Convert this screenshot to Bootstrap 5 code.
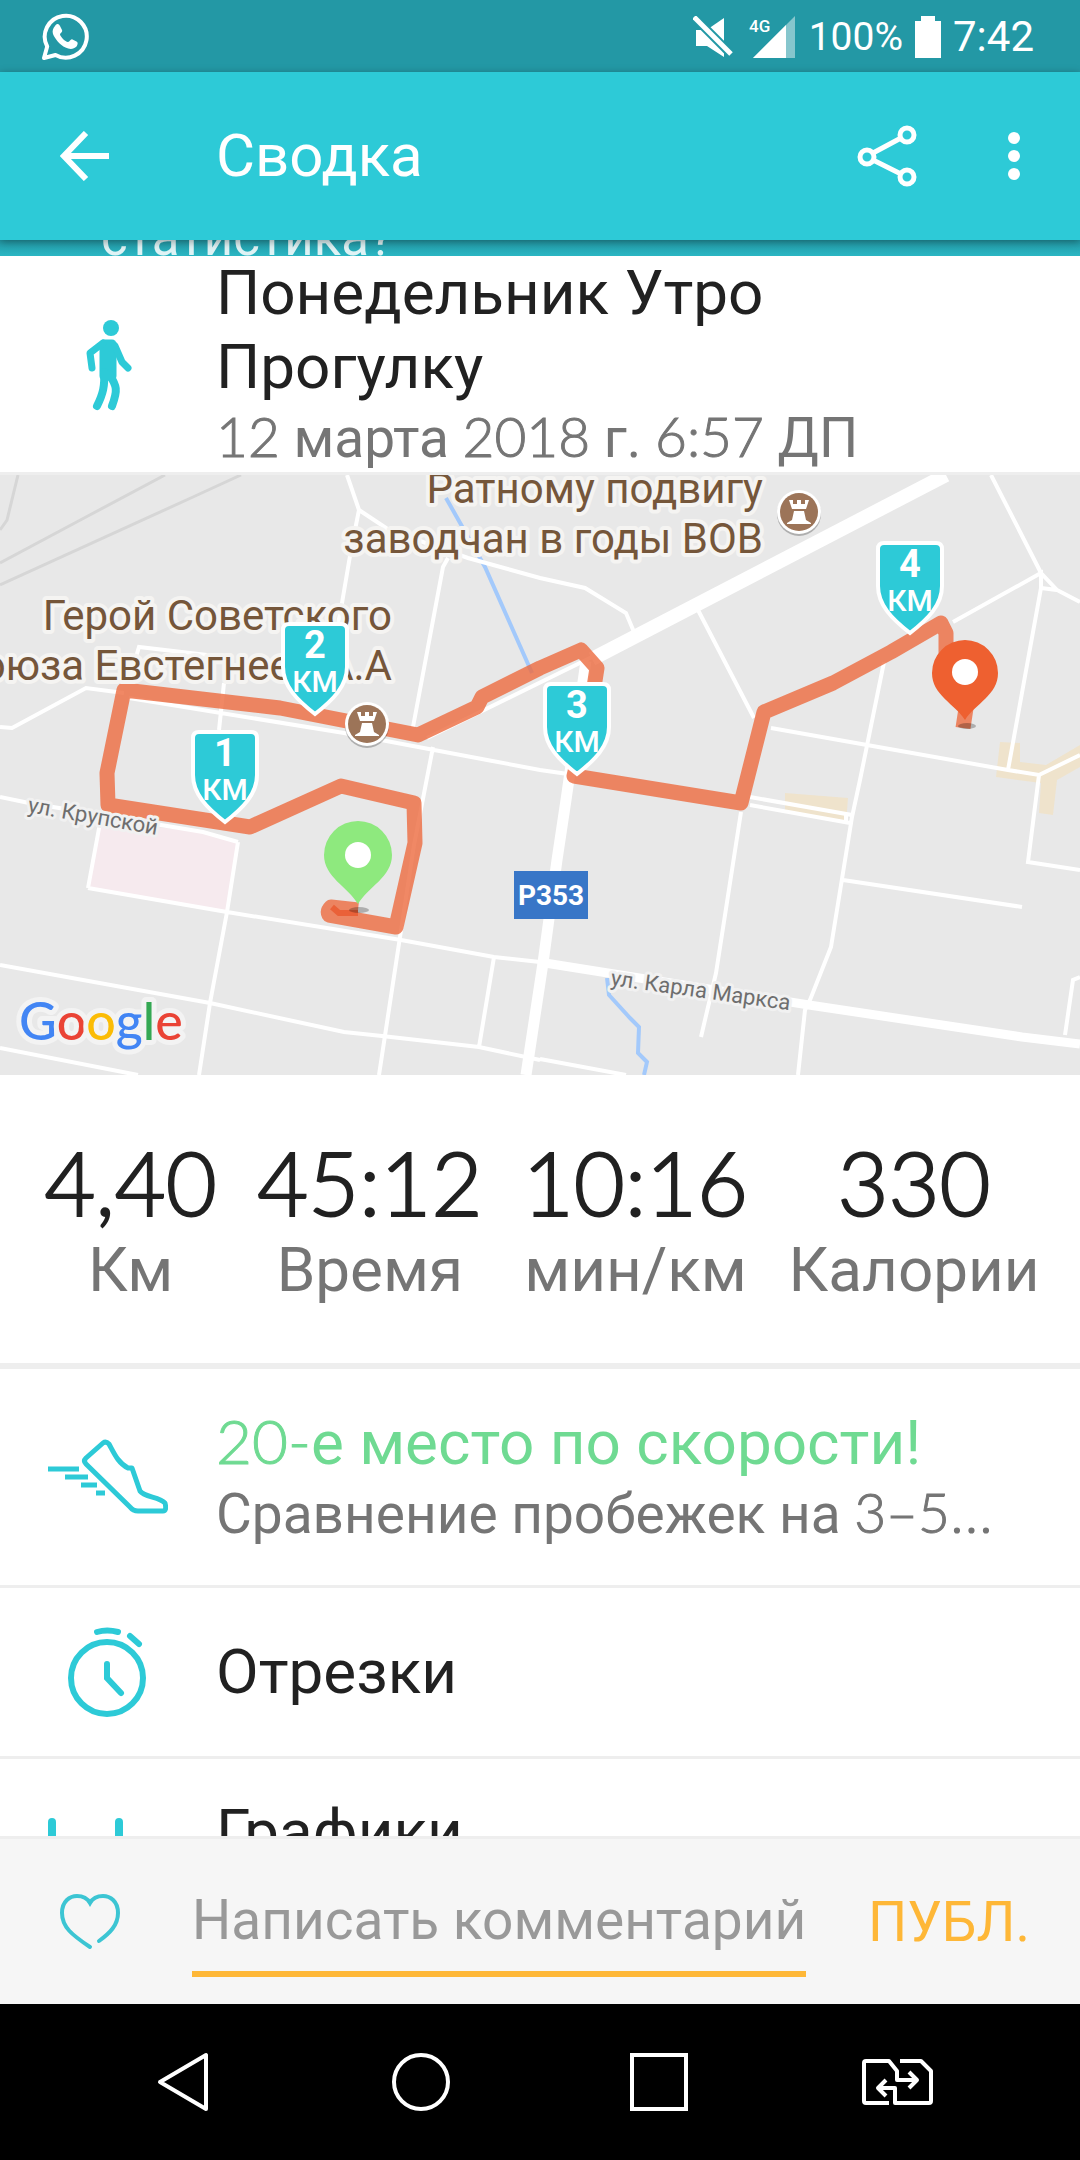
<!DOCTYPE html>
<html lang="ru">
<head>
<meta charset="utf-8">
<meta name="viewport" content="width=device-width, initial-scale=1">
<title>Сводка</title>
<link href="https://cdn.jsdelivr.net/npm/bootstrap@5.3.0/dist/css/bootstrap.min.css" rel="stylesheet">
<style>
  :root { --teal: #2dcad7; --teal-dark: #2398a5; --ink: #212121; --muted: #757575; --amber: #feb737; --rule: #eeeeee; }
  body { font-family: Roboto, "Noto Sans", sans-serif; color: var(--ink); background: #fff; }
  svg { display: block; flex: none; }
  .status-bar { height: 72px; background: var(--teal-dark); color: #fff; padding: 2px 46px 0 40px; }
  .status-pct { font-size: 39px; line-height: 44px; margin: 0 12px; }
  .status-time { font-size: 42px; line-height: 44px; }
  .app-bar { height: 168px; background: var(--teal); color: #fff; box-shadow: 0 2px 8px rgba(0,0,0,.35); z-index: 2; padding: 0 60px; }
  .app-bar h1 { font-size: 60px; line-height: 74px; font-weight: 400; padding-left: 106px; }
  .app-actions { gap: 90px; }
  .icon-btn { border: 0; background: none; padding: 0; color: inherit; }
  .scroll-view { min-height: 0; }
  .promo { height: 16px; background: linear-gradient(#2399a6, #2ab6c3); color: #dff3f5; font-size: 51px; line-height: 36px; padding-left: 101px; }
  .lead-icon { width: 216px; padding-left: 48px; color: var(--teal); flex: none; }
  .line-title { font-size: 62px; line-height: 74px; font-weight: 400; }
  .line-sub { font-size: 55px; line-height: 68px; color: var(--muted); }
  .digits { font-family: Lato, Roboto, sans-serif; font-weight: 300; line-height: 1; -webkit-text-stroke: 1px currentColor; }
  .summary-head { border-bottom: 3px solid var(--rule); }
  .map-view svg { width: 100%; height: auto; }
  .stats { padding: 57px 0 56px 4px; border-bottom: 6px solid var(--rule); }
  .stats dd { font-family: Lato, Roboto, sans-serif; font-weight: 300; -webkit-text-stroke: 2px currentColor; font-size: 88px; line-height: 100px; }
  .stats dt { font-size: 62px; line-height: 75px; font-weight: 400; color: var(--muted); }
  .menu-row { color: var(--ink); border-bottom: 3px solid var(--rule); height: 171px; }
  .menu-row.tall { height: 219px; }
  .menu-row.last { height: 148px; }
  .place { color: #6fda92; }
  .comment-bar { height: 168px; border-top: 3px solid var(--rule); background: #f6f6f6; padding: 0 50px 0 60px; }
  .comment-box { height: 110px; min-width: 0; margin: 0 62px 0 72px; padding: 2px 0 0; border: 0; border-bottom: 6px solid var(--amber); border-radius: 0; background: none; font-size: 55px; }
  .comment-box::placeholder { color: #999; opacity: 1; }
  .publish { font-size: 55px; line-height: 68px; color: var(--amber); }
  .nav-bar { height: 156px; background: #000; color: #fff; padding: 0 146px; }
</style>
</head>
<body>
<div class="d-flex flex-column vh-100 overflow-hidden">
  <div class="status-bar d-flex align-items-center flex-shrink-0">
    <svg width="50" height="50" viewBox="0 0 50 50" fill="none" stroke="#fff" aria-label="WhatsApp"><path d="M4 46l3.200-11.500A21 21 0 1 1 15.500 43z" stroke-width="4" stroke-linejoin="round"/><path d="M15 14c2-3 4-2 5 0l2 4c1 2-2 3-2 4.500 1 3 5 7 8 7.500 2 0 2.500-3.500 4.500-2.500l4 2c2 1 1 3.500 0 5-3 3-7 3-11 1C20 33 15 27 13 22c-1-3 0-6 2-8z" fill="#fff" stroke="none"/></svg>
    <svg class="ms-auto" width="40" height="42" viewBox="0 0 40 42" fill="#fff" aria-label="Без звука"><path d="M31 2v27L15 13z"/><path d="M3 14h6l22 22v5L14 30H3z"/><path d="M1 1l37 37" stroke="#2398a5" stroke-width="9"/><path d="M1 1l37 37" stroke="#fff" stroke-width="5"/></svg>
    <svg class="ms-3" width="48" height="44" viewBox="0 0 48 44" aria-label="4G"><path d="M4 43L46 1v42z" fill="#fff" opacity=".45"/><path d="M4 43L37 10v33z" fill="#fff"/><text x="0" y="17" font-size="17" font-weight="500" fill="#fff">4G</text></svg>
    <span class="status-pct">100%</span>
    <svg width="26" height="44" viewBox="0 0 26 44" fill="#fff" aria-label="Батарея"><path d="M6 1h14v5h6v37H0V6h6z"/></svg>
    <span class="status-time ms-2 ps-1">7:42</span>
  </div>

  <header class="app-bar d-flex align-items-center flex-shrink-0 position-relative">
    <button class="icon-btn" type="button" aria-label="Назад"><svg width="50" height="50" viewBox="0 0 50 50" fill="none" stroke="currentColor" stroke-width="6"><path d="M26 2L4 25l22 23M4 25h45"/></svg></button>
    <h1 class="mb-0">Сводка</h1>
    <div class="app-actions d-flex align-items-center ms-auto">
      <button class="icon-btn" type="button" aria-label="Поделиться"><svg width="62" height="62" viewBox="0 0 62 62" fill="none" stroke="currentColor" stroke-width="5"><circle cx="11" cy="32" r="7"/><circle cx="51" cy="10" r="7"/><circle cx="51" cy="52" r="7"/><path d="M17 28l28-15M17 35l28 14"/></svg></button>
      <button class="icon-btn" type="button" aria-label="Ещё"><svg width="12" height="48" viewBox="0 0 12 48" fill="currentColor"><circle cx="6" cy="6" r="6"/><circle cx="6" cy="24" r="6"/><circle cx="6" cy="42" r="6"/></svg></button>
    </div>
  </header>

  <main class="scroll-view flex-grow-1 overflow-hidden">
    <div class="promo d-flex align-items-end overflow-hidden">статистика?</div>

    <section class="summary-head d-flex align-items-center">
      <div class="lead-icon"><svg width="120" height="96" viewBox="0 0 120 96" fill="none" stroke="currentColor" stroke-linecap="round" stroke-linejoin="round"><circle cx="63" cy="12" r="8" fill="currentColor" stroke="none"/><path d="M56 28h8v32H56z" fill="currentColor" stroke-width="9"/><path d="M55 27L42 37l2 15M67 30l7 16 6 6" stroke-width="7"/><path d="M56 56c1 14-1 22-7 34M61 58c8 12 9 16 3 32" stroke-width="8"/></svg></div>
      <div>
        <h2 class="line-title mb-0">Понедельник Утро<br>Прогулку</h2>
        <div class="line-sub"><span class="digits">12</span> марта <span class="digits">2018</span> г. <span class="digits">6:57</span> ДП</div>
      </div>
    </section>

    <section class="map-view" aria-label="Карта маршрута">
      <svg viewBox="0 0 1080 600">
        <defs>
          <path id="shield" d="M-26 2H26Q32 2 32 8V45C32 64 18 78 0 92C-18 78-32 64-32 45V8Q-32 2-26 2Z" fill="#2dcad7" stroke="#fff" stroke-width="4"/>
          <g id="rook"><circle cy="2" r="22" fill="#000" opacity=".25"/><circle r="22" fill="#fff"/><circle r="19" fill="#9c7458"/><path d="M-10-12h4v4h4v-4h4v4h4v-4h4l-3 9H-7zM-5-1H5L7 8l5 3v1h-24v-1l5-3z" fill="#fff"/></g>
        </defs>
        <rect width="1080" height="600" fill="#e8e8e8"/>
        <g fill="none" stroke="#d6d6d6" stroke-width="3"><path d="M18 0L7 45 0 55M165 0L86 42 0 88M241 0L193 22 0 110"/></g>
        <path d="M100 346L203 357 238 367 227 437 88 413z" fill="#f6eaee"/>
        <path d="M1000 267l20 1v19l26 3 34-20v22l-23 13-4 35-14-2 2-30-45-6zM785 318l63 5-2 25-61-11z" fill="#efe3cc"/>
        <g fill="none" stroke="#a3c9fb" stroke-width="4"><path d="M446 23L485 92 532 198"/><path d="M607 503L609 520 630 543 639 552 638 578 647 587 644 600"/></g>
        <g fill="none" stroke="#fff" stroke-width="4">
          <path d="M347 0L359 35 351 75 342 128 334 170M359 35L389 55 468 83 540 103 585 113 626 138 634 157M413 252L443 92 448 83"/>
          <path d="M0 252L12 253 86 213 124 218M129 223L344 258 540 295 568 299M136 182L139 172 207 180M224 208L219 255M427 263L592 182M433 272L414 370 400 462 379 600"/>
          <path d="M698 135L754 243M991 0L1041 98 1057 115 1041 113 1008 295M953 147L1041 98V113M1057 115L1080 127M771 253L867 270 1008 295 1039 300 1080 280M1039 300L1028 387 1080 395"/>
          <path d="M884 187L860 305 852 342 831 472 810 525 805 535 798 600M750 322L852 340M750 330L850 348M846 338V348M741 337L716 498 701 562M843 405L1022 432M1080 502L1073 505 1065 560"/>
          <path d="M540 584L626 600M0 490L210 528 344 557 382 561 479 572 540 585M0 573L138 600M494 482L479 572M88 413L227 437 401 465 494 482 540 487M238 367L227 437 210 528 199 600M0 322L29 328 203 357 238 367M100 348L88 413"/>
          <path d="M592 184L946 0" stroke-width="14"/>
          <path d="M586 186L566 325 557 385 543 488 526 600" stroke-width="11"/>
          <path d="M545 488L809 530 1022 562 1080 569" stroke-width="9"/>
        </g>
        <path d="M358 435L331 432Q327 436 329 440L396 452 415 368 414 328 341 311 250 352 108 330 107 298 124 215 280 233 418 260 477 232 482 222 540 193 581 175 597 193 592 225 574 301 741 328 764 237 833 208 891 177 941 148 946 158 946 195 968 220 963 253" fill="none" stroke="#ec6a3e" stroke-opacity=".8" stroke-width="15" stroke-linejoin="round"/>
        <path d="M332 432L339 438H358" fill="none" stroke="#ea6138" stroke-width="6"/>
        <g fill="#75563a" stroke="#f5f4f2" stroke-width="8" stroke-linejoin="round" paint-order="stroke" font-size="42" text-anchor="end">
          <text x="763" y="28">Ратному подвигу</text><text x="763" y="78">заводчан в годы ВОВ</text>
          <text x="392" y="155">Герой Советского</text><text x="392" y="205">Союза Евстегнеев А.А</text>
        </g>
        <g fill="#6e6e6e" stroke="#f1f1f1" stroke-width="6" stroke-linejoin="round" paint-order="stroke" font-size="22">
          <text transform="translate(27 337) rotate(10)">ул. Крупской</text>
          <text transform="translate(610 510) rotate(8)">ул. Карла Маркса</text>
        </g>
        <rect x="514" y="396" width="74" height="48" fill="#3876c7"/><text x="551" y="430" font-size="28" font-weight="700" fill="#fff" text-anchor="middle">Р353</text>
        <use href="#rook" x="367" y="249"/><use href="#rook" x="799" y="37"/>
        <use href="#shield" x="225" y="255"/><use href="#shield" x="315" y="147"/><use href="#shield" x="577" y="207"/><use href="#shield" x="910" y="66"/>
        <g fill="#fff" text-anchor="middle" font-size="38" font-weight="700"><text x="225" y="291">1</text><text x="315" y="183">2</text><text x="577" y="243">3</text><text x="910" y="102">4</text></g>
        <g fill="#fff" text-anchor="middle" font-size="30" font-weight="500"><text x="225" y="325">КМ</text><text x="315" y="217">КМ</text><text x="577" y="277">КМ</text><text x="910" y="136">КМ</text></g>
        <ellipse cx="359" cy="435" rx="10" ry="3" opacity=".25"/><ellipse cx="967" cy="251" rx="9" ry="3" opacity=".25"/>
        <path d="M358 429C348 412 324 402 324 380A34 34 0 0 1 392 380C392 402 368 412 358 429Z" fill="#8ee97e"/><circle cx="358" cy="380" r="13" fill="#fff"/>
        <path d="M965 245C955 229 932 220 932 198A33 33 0 0 1 998 198C998 220 975 229 965 245Z" fill="#ee6030"/><circle cx="965" cy="197" r="13" fill="#fff"/>
        <text x="19" y="565" font-family="Lato, sans-serif" font-size="52" font-weight="500" stroke="#f3f3f3" stroke-width="10" stroke-linejoin="round" paint-order="stroke"><tspan fill="#4285f4">G</tspan><tspan fill="#ea4335">o</tspan><tspan fill="#fbbc05">o</tspan><tspan fill="#4285f4">g</tspan><tspan fill="#34a853">l</tspan><tspan fill="#ea4335">e</tspan></text>
      </svg>
    </section>

    <section class="stats d-flex justify-content-evenly text-center">
      <dl class="d-flex flex-column-reverse mb-0"><dt>Км</dt><dd class="mb-0">4,40</dd></dl>
      <dl class="d-flex flex-column-reverse mb-0"><dt>Время</dt><dd class="mb-0">45:12</dd></dl>
      <dl class="d-flex flex-column-reverse mb-0"><dt>мин/км</dt><dd class="mb-0">10:16</dd></dl>
      <dl class="d-flex flex-column-reverse mb-0"><dt>Калории</dt><dd class="mb-0">330</dd></dl>
    </section>

    <nav>
      <a href="#places" class="menu-row tall d-flex align-items-center text-decoration-none">
        <span class="lead-icon"><svg width="120" height="76" viewBox="0 0 120 76" fill="none" stroke="currentColor" stroke-width="5" stroke-linejoin="round"><path d="M55 4Q58 2 61 5C66 14 70 24 80 29H84L92 52C96 58 112 58 117 64Q119 72 115 72H90Q85 72 82 68L38 25Q35 22 38 19Z"/><path d="M0 30h31M17 38h23M33 46h16M48 54h9"/></svg></span>
        <span class="d-block flex-grow-1">
          <span class="line-title place d-block"><span class="digits">20-</span>е место по скорости!</span>
          <span class="line-sub d-block text-nowrap">Сравнение пробежек на <span class="digits">3–5</span>...</span>
        </span>
      </a>
      <a href="#laps" class="menu-row d-flex align-items-center text-decoration-none">
        <span class="lead-icon"><svg width="120" height="96" viewBox="0 0 120 96" fill="none" stroke="currentColor" stroke-width="6" stroke-linecap="round"><circle cx="59" cy="54" r="36"/><path d="M59 40V54L73 69M49 8Q59 5 70 8M82 12L91 20"/></svg></span>
        <span class="line-title">Отрезки</span>
      </a>
      <a href="#charts" class="menu-row last d-flex align-items-center text-decoration-none">
        <span class="lead-icon"><svg width="120" height="28" viewBox="0 0 120 28" fill="none" stroke="currentColor" stroke-width="8" stroke-linecap="round"><path d="M4 4V60M71 4V60"/></svg></span>
        <span class="line-title">Графики</span>
      </a>
    </nav>
  </main>

  <form class="comment-bar d-flex align-items-center flex-shrink-0">
    <button class="icon-btn" type="button" aria-label="Нравится"><svg width="60" height="58" viewBox="0 0 60 58" fill="none" stroke="#3cc5d3" stroke-width="4" stroke-linecap="round"><path d="M30 54C12 42 2 34 2 20C2 8 10 3 17 3Q26 3 30 10Q34 3 43 3C50 3 58 8 58 20C58 32 50 40 39 48"/></svg></button>
    <input class="comment-box flex-grow-1" type="text" placeholder="Написать комментарий" aria-label="Написать комментарий">
    <button class="icon-btn publish" type="submit">ПУБЛ.</button>
  </form>

  <div class="nav-bar d-flex align-items-center justify-content-between flex-shrink-0">
    <button class="icon-btn" type="button" aria-label="Назад"><svg width="74" height="60" viewBox="0 0 74 60" fill="none" stroke="currentColor" stroke-width="4" stroke-linejoin="round"><path d="M60 3V57L14 30z"/></svg></button>
    <button class="icon-btn" type="button" aria-label="Домой"><svg width="74" height="60" viewBox="0 0 74 60" fill="none" stroke="currentColor" stroke-width="4"><circle cx="37" cy="30" r="27"/></svg></button>
    <button class="icon-btn" type="button" aria-label="Недавние"><svg width="74" height="60" viewBox="0 0 74 60" fill="none" stroke="currentColor" stroke-width="4"><rect x="10" y="3" width="54" height="54"/></svg></button>
    <button class="icon-btn" type="button" aria-label="Переключить"><svg width="74" height="50" viewBox="0 0 74 50" fill="none" stroke="currentColor" stroke-width="4" stroke-linejoin="round"><path d="M29 46H6Q4 46 4 44V6Q4 4 6 4H29L37 14V23H55M49 15l8 8-8 8M40 4H61L71 14V44Q71 46 69 46H35V31H19M26 23l-8 8 8 8"/></svg></button>
  </div>
</div>
<script src="https://cdn.jsdelivr.net/npm/bootstrap@5.3.0/dist/js/bootstrap.bundle.min.js"></script>
</body>
</html>
